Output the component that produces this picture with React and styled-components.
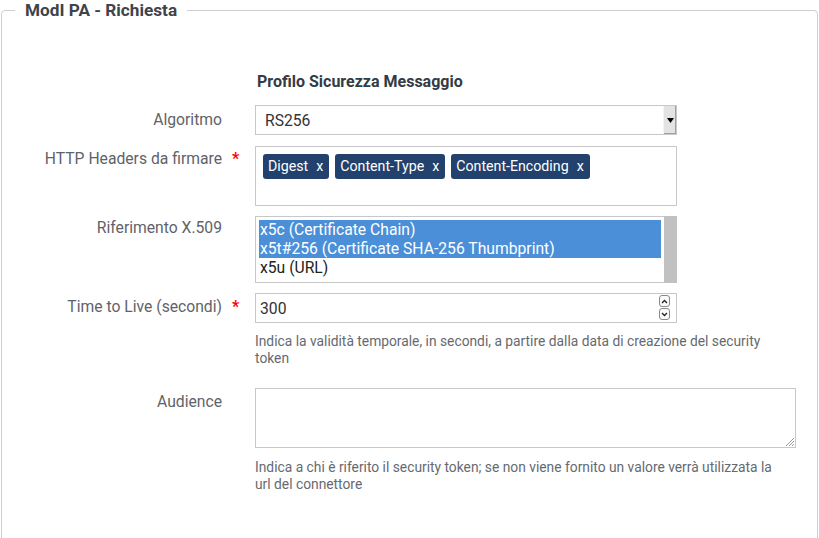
import React from "react";
import styled, { createGlobalStyle } from "styled-components";

const Global = createGlobalStyle`
  html, body { margin: 0; padding: 0; background: #fff; }
  body { font-family: Roboto, "Liberation Sans", sans-serif; color: #333; overflow: hidden; }
`;

const Fieldset = styled.fieldset`
  margin: 0 1px;
  padding: 0 13px 40px 13px;
  border: 1px solid #cfcfcf;
  border-radius: 4px;
  min-height: 560px;
  box-sizing: border-box;
`;

const Legend = styled.legend`
  padding: 0 10px;
  font-size: 17.2px;
  font-weight: 700;
  line-height: 21px;
  color: #3f434a;
`;

const Title = styled.div`
  margin: 51px 0 13px 242px;
  font-size: 16px;
  font-weight: 700;
  line-height: 20px;
  color: #333b44;
`;

const Row = styled.div`
  display: grid;
  grid-template-columns: 225px 1fr;
  column-gap: 15px;
  margin-bottom: ${(p) => p.$mb ?? 11}px;
`;

const Label = styled.div`
  display: flex;
  justify-content: flex-end;
  font-size: 15.7px;
  line-height: 20px;
  padding-top: ${(p) => p.$pt ?? 4}px;
  color: #5f6369;
`;

const Req = styled.span`
  width: 18px;
  padding-left: 10px;
  box-sizing: border-box;
  color: #f00;
  font-weight: 700;
  font-size: 16px;
`;

const Field = styled.div`
  width: ${(p) => p.$w ?? 422}px;
`;

const Box = styled.div`
  position: relative;
  box-sizing: border-box;
  border: 1px solid #c8c8c8;
  background: #fff;
  height: ${(p) => p.$h}px;
  font-size: 15.7px;
  color: #333;
`;

const SelectBox = styled(Box)`
  display: flex;
  align-items: center;
  padding-left: 9px;
`;

const SelectBtn = styled.div`
  position: absolute;
  right: 0;
  top: 0;
  bottom: 0;
  width: 12px;
  background: #e3e3e3;
  border-left: 1px solid #f4f4f4;
  box-shadow: inset -1px -1px 0 #a0a0a0;
  display: flex;
  align-items: center;
  justify-content: center;
`;

const Tags = styled.div`
  display: flex;
  gap: 6px;
  padding: 7px 0 0 7px;
`;

const Tag = styled.span`
  background: #22416d;
  color: #fff;
  border-radius: 3px;
  height: 25px;
  line-height: 25px;
  padding: 0 6px 0 5px;
  font-size: 14.2px;
  display: inline-flex;
  gap: 8px;
`;

const ListBox = styled(Box)`
  padding: 3px 0 0 3px;
`;

const Option = styled.div`
  width: 402px;
  height: 19px;
  line-height: 19px;
  padding-left: 1px;
  box-sizing: border-box;
  background: ${(p) => (p.$sel ? "#4a8fd8" : "transparent")};
  color: ${(p) => (p.$sel ? "#fff" : "#222")};
`;

const Scroll = styled.div`
  position: absolute;
  right: -1px;
  top: -1px;
  bottom: -1px;
  width: 13px;
  background: #c1c1c1;
`;

const InputBox = styled(Box)`
  display: flex;
  align-items: center;
  padding-left: 4px;
`;

const Spin = styled.div`
  position: absolute;
  right: 6px;
  top: 1px;
  display: flex;
  flex-direction: column;
  gap: 1px;
`;

const SpinBtn = styled.div`
  width: 11px;
  height: 12px;
  border: 1px solid #8a8a8a;
  border-radius: 3px;
  box-sizing: border-box;
  display: flex;
  align-items: center;
  justify-content: center;
  background: #fafafa;
`;

const Grip = styled.svg`
  position: absolute;
  right: 1px;
  bottom: 1px;
`;

const Help = styled.div`
  font-size: 13.8px;
  line-height: 17px;
  color: #666a70;
  margin-top: ${(p) => p.$mt ?? 10}px;
  width: 528px;
`;

export default function App() {
  return (
    <>
      <Global />
      <Fieldset>
        <Legend>ModI PA - Richiesta</Legend>
        <Title>Profilo Sicurezza Messaggio</Title>

        <Row>
          <Label $pt={5}>
            Algoritmo<Req />
          </Label>
          <Field>
            <SelectBox $h={30}>
              RS256
              <SelectBtn>
                <svg width="7" height="5" viewBox="0 0 7 5">
                  <path d="M0 0h7L3.5 5z" fill="#000" />
                </svg>
              </SelectBtn>
            </SelectBox>
          </Field>
        </Row>

        <Row $mb={10}>
          <Label $pt={3}>
            HTTP Headers da firmare<Req>*</Req>
          </Label>
          <Field>
            <Box $h={60}>
              <Tags>
                <Tag>Digest<span>x</span></Tag>
                <Tag>Content-Type<span>x</span></Tag>
                <Tag>Content-Encoding<span>x</span></Tag>
              </Tags>
            </Box>
          </Field>
        </Row>

        <Row $mb={10}>
          <Label $pt={2}>
            Riferimento X.509<Req />
          </Label>
          <Field>
            <ListBox $h={67}>
              <Option $sel>x5c (Certificate Chain)</Option>
              <Option $sel>x5t#256 (Certificate SHA-256 Thumbprint)</Option>
              <Option>x5u (URL)</Option>
              <Scroll />
            </ListBox>
          </Field>
        </Row>

        <Row $mb={21}>
          <Label $pt={4}>
            Time to Live (secondi)<Req>*</Req>
          </Label>
          <Field>
            <InputBox $h={30}>
              300
              <Spin>
                <SpinBtn>
                  <svg width="7" height="5" viewBox="0 0 7 5">
                    <path d="M1 4L3.5 1.5L6 4" fill="none" stroke="#222" strokeWidth="1.3" />
                  </svg>
                </SpinBtn>
                <SpinBtn>
                  <svg width="7" height="5" viewBox="0 0 7 5">
                    <path d="M1 1L3.5 3.5L6 1" fill="none" stroke="#222" strokeWidth="1.3" />
                  </svg>
                </SpinBtn>
              </Spin>
            </InputBox>
            <Help>
              Indica la validità temporale, in secondi, a partire dalla data di creazione del security
              token
            </Help>
          </Field>
        </Row>

        <Row>
          <Label $pt={4}>
            Audience<Req />
          </Label>
          <Field $w={541}>
            <Box $h={60}>
              <Grip width="9" height="9" viewBox="0 0 9 9">
                <path d="M9 1L1 9M9 4L4 9M9 7L7 9" stroke="#999" strokeWidth="1" />
              </Grip>
            </Box>
            <Help $mt={11}>
              Indica a chi è riferito il security token; se non viene fornito un valore verrà utilizzata la
              url del connettore
            </Help>
          </Field>
        </Row>
      </Fieldset>
    </>
  );
}
